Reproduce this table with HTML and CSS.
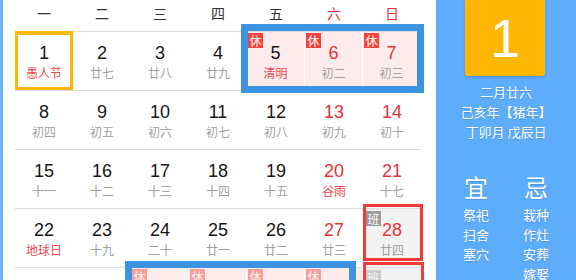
FILE: index.html
```html
<!DOCTYPE html>
<html lang="zh">
<head>
<meta charset="utf-8">
<title>万年历</title>
<link rel="stylesheet" href="styles.css">
</head>
<body>
<div class="page">
  <div class="edge"></div>
  <div class="cal">
    <div class="grid">
      <div class="wd">一</div><div class="wd">二</div><div class="wd">三</div><div class="wd">四</div><div class="wd">五</div><div class="wd red">六</div><div class="wd red">日</div>

      <div class="day today"><span class="num">1</span><span class="lunar fest">愚人节</span></div>
      <div class="day"><span class="num">2</span><span class="lunar">廿七</span></div>
      <div class="day"><span class="num">3</span><span class="lunar">廿八</span></div>
      <div class="day"><span class="num">4</span><span class="lunar">廿九</span></div>
      <div class="day off"><i class="tag">休</i><span class="num">5</span><span class="lunar fest">清明</span></div>
      <div class="day off red"><i class="tag">休</i><span class="num">6</span><span class="lunar">初二</span></div>
      <div class="day off red"><i class="tag">休</i><span class="num">7</span><span class="lunar">初三</span></div>

      <div class="day"><span class="num">8</span><span class="lunar">初四</span></div>
      <div class="day"><span class="num">9</span><span class="lunar">初五</span></div>
      <div class="day"><span class="num">10</span><span class="lunar">初六</span></div>
      <div class="day"><span class="num">11</span><span class="lunar">初七</span></div>
      <div class="day"><span class="num">12</span><span class="lunar">初八</span></div>
      <div class="day red"><span class="num">13</span><span class="lunar">初九</span></div>
      <div class="day red"><span class="num">14</span><span class="lunar">初十</span></div>

      <div class="day"><span class="num">15</span><span class="lunar">十一</span></div>
      <div class="day"><span class="num">16</span><span class="lunar">十二</span></div>
      <div class="day"><span class="num">17</span><span class="lunar">十三</span></div>
      <div class="day"><span class="num">18</span><span class="lunar">十四</span></div>
      <div class="day"><span class="num">19</span><span class="lunar">十五</span></div>
      <div class="day red"><span class="num">20</span><span class="lunar fest">谷雨</span></div>
      <div class="day red"><span class="num">21</span><span class="lunar">十七</span></div>

      <div class="day"><span class="num">22</span><span class="lunar fest">地球日</span></div>
      <div class="day"><span class="num">23</span><span class="lunar">十九</span></div>
      <div class="day"><span class="num">24</span><span class="lunar">二十</span></div>
      <div class="day"><span class="num">25</span><span class="lunar">廿一</span></div>
      <div class="day"><span class="num">26</span><span class="lunar">廿二</span></div>
      <div class="day red"><span class="num">27</span><span class="lunar">廿三</span></div>
      <div class="day red work"><i class="tag">班</i><span class="num">28</span><span class="lunar">廿四</span></div>

      <div class="day other"><span class="num">29</span><span class="lunar">廿五</span></div>
      <div class="day other"><span class="num">30</span><span class="lunar">廿六</span></div>
      <div class="day off other"><i class="tag">休</i><span class="num">1</span><span class="lunar fest">劳动节</span></div>
      <div class="day off other"><i class="tag">休</i><span class="num">2</span><span class="lunar">廿八</span></div>
      <div class="day off other"><i class="tag">休</i><span class="num">3</span><span class="lunar">廿九</span></div>
      <div class="day off other red"><i class="tag">休</i><span class="num">4</span><span class="lunar fest">青年节</span></div>
      <div class="day work other red"><i class="tag">班</i><span class="num">5</span><span class="lunar">初一</span></div>
    </div>
    <div class="frame holiday h-qingming"></div>
    <div class="frame holiday h-may"></div>
    <div class="frame workday w-apr28"></div>
    <div class="frame workday w-may5"></div>
  </div>

  <aside class="panel">
    <div class="big">1</div>
    <div class="info">
      <p>二月廿六</p>
      <p>己亥年【猪年】</p>
      <p>丁卯月 戊辰日</p>
    </div>
    <div class="sep"></div>
    <div class="yiji">
      <div class="col">
        <h3>宜</h3>
        <p>祭祀</p><p>扫舍</p><p>塞穴</p>
      </div>
      <div class="col">
        <h3>忌</h3>
        <p>栽种</p><p>作灶</p><p>安葬</p><p>嫁娶</p>
      </div>
    </div>
  </aside>
</div>
</body>
</html>
```

FILE: styles.css
```css
* { box-sizing: border-box; }
html, body {
  margin: 0;
  padding: 0;
  background: #fff;
}
body {
  width: 576px;
  height: 280px;
  overflow: hidden;
  font-family: "Liberation Sans", "Noto Sans CJK SC", sans-serif;
}
.page {
  display: flex;
  height: 280px;
  overflow: hidden;
}
.edge {
  width: 3px;
  flex: none;
  background: #6cb6fb;
}
.cal {
  position: relative;
  flex: none;
  width: 406px;
  margin-left: 12px;
}
.grid {
  display: grid;
  grid-template-columns: repeat(7, 58px);
  grid-template-rows: 31px repeat(5, 59px);
}
.wd {
  text-align: center;
  font-family: "Noto Sans CJK SC", sans-serif;
  font-size: 14px;
  line-height: 27px;
  color: #333;
}
.wd.red { color: #e5323a; }

.day {
  position: relative;
  display: flex;
  flex-direction: column;
  align-items: center;
  padding-top: 10px;
  border-top: 1px solid #dcdcdc;
}
.num {
  font-size: 18px;
  line-height: 22px;
  color: #161616;
}
.lunar {
  font-family: "Noto Sans CJK SC", sans-serif;
  font-size: 12px;
  line-height: 18px;
  color: #a0a0a0;
}
.lunar.fest { color: #ef4a50; }
.day.red .num { color: #e5323a; }

.day.today {
  box-shadow: inset 0 0 0 3px #ffb800;
  border-top-color: #ffb800;
}
.day.off {
  background: #fdeceb;
  border-right: 1px solid #fff;
}
.day.work {
  background: #f2f2f2;
}
.tag {
  position: absolute;
  left: 1px;
  top: 1px;
  width: 15px;
  height: 15px;
  font-style: normal;
  font-family: "Noto Sans CJK SC", sans-serif;
  font-size: 12px;
  line-height: 15px;
  text-align: center;
  color: #fff;
  background: #f4433c;
}
.day.work .tag {
  background: #9a9a9a;
  left: 3px;
  top: 2px;
}
.day.other .tag { opacity: 0.45; }

.frame {
  position: absolute;
  pointer-events: none;
}
.frame.holiday { border: 7px solid #3b93e2; }
.frame.workday { border: 3px solid #f23a3a; }
.h-qingming { left: 226px; top: 24px; width: 183px; height: 69px; }
.h-may { left: 110px; top: 261px; width: 231px; height: 69px; }
.w-apr28 { left: 348px; top: 204px; width: 60px; height: 57px; }
.w-may5 { left: 348px; top: 262px; width: 61px; height: 57px; }

.panel {
  flex: none;
  width: 140px;
  margin-left: 15px;
  background: #5dadfb;
  display: flex;
  flex-direction: column;
  align-items: center;
  color: #fff;
  font-family: "Noto Sans CJK SC", sans-serif;
  text-shadow: 0 1px 1px rgba(0, 40, 100, 0.18);
}
.big {
  width: 80px;
  height: 76px;
  margin-left: -2px;
  background: #ffb703;
  border-radius: 0 0 3px 3px;
  box-shadow: 0 1px 3px rgba(0, 40, 100, 0.25);
  font-family: "Liberation Sans", sans-serif;
  font-size: 54px;
  line-height: 76px;
  text-align: center;
  text-shadow: none;
}
.info {
  margin-top: 6px;
  text-align: center;
}
.info p {
  margin: 0;
  font-size: 13px;
  line-height: 20px;
  white-space: nowrap;
}
.sep {
  width: 117px;
  height: 2px;
  margin-top: 13px;
  background: #8cc5fc;
}
.yiji {
  display: grid;
  grid-template-columns: 60px 60px;
  margin-top: 17px;
}
.col {
  text-align: center;
}
.col h3 {
  margin: 0 0 3px;
  font-weight: normal;
  font-size: 24px;
  line-height: 30px;
}
.col p {
  margin: 0;
  font-size: 13px;
  line-height: 19.7px;
}
```
